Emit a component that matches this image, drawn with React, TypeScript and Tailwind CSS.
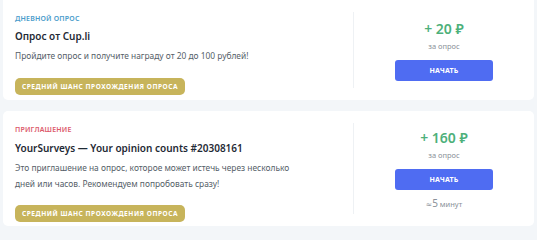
import React from "react";

const font = { fontFamily: '"Noto Sans", "DejaVu Sans", sans-serif' };

function Badge() {
  return (
    <div className="inline-flex h-[17px] items-center rounded-[5px] bg-[#c7b45b] px-[7px] text-[6.6px] font-bold uppercase tracking-[0.5px] text-white">
      Средний шанс прохождения опроса
    </div>
  );
}

function Right({ price, time }: { price: string; time?: string }) {
  return (
    <div className="my-[12px] flex w-[181px] shrink-0 flex-col items-center justify-center border-l border-[#eef1f4]">
      <div className="text-[14px] font-semibold leading-[20px] text-[#4db07a]">{price}</div>
      <div className="mt-[1px] text-[7.5px] leading-[12px] text-[#8a9199]">за опрос</div>
      <button className="mt-[8px] h-[21px] w-[98px] rounded-[3px] bg-[#4f6cf2] text-[7px] font-bold uppercase leading-none tracking-[0.2px] text-white">
        Начать
      </button>
      {time && (
        <div className="mt-[7px] text-[7.5px] leading-[12px] text-[#8a9199]">
          ≈<span className="text-[10px]">5</span> минут
        </div>
      )}
    </div>
  );
}

export default function App() {
  return (
    <div style={font} className="flex h-[240px] w-[537px] flex-col gap-[11px] bg-[#f3f6f9] px-[3px]">
      <div className="flex h-[100px] rounded-b-[5px] bg-white">
        <div className="flex-1 pl-[12px] pr-[44px] pt-[13px]">
          <div className="text-[7px] font-semibold uppercase leading-[12px] tracking-[0.2px] text-[#4a9ccb]">Дневной опрос</div>
          <div className="mt-[3px] text-[10px] font-semibold leading-[16px] text-[#1f2a35]">Опрос от Cup.li</div>
          <div className="mt-[4px] text-[8.4px] leading-[16px] text-[#555e68]">
            Пройдите опрос и получите награду от 20 до 100 рублей!
          </div>
          <div className="mt-[7px]">
            <Badge />
          </div>
        </div>
        <Right price="+ 20 ₽" />
      </div>
      <div className="flex h-[115px] rounded-[5px] bg-white">
        <div className="flex-1 pl-[12px] pr-[44px] pt-[13px]">
          <div className="text-[7px] font-semibold uppercase leading-[12px] tracking-[0.2px] text-[#dc5a6b]">Приглашение</div>
          <div className="mt-[4px] text-[10px] font-semibold leading-[16px] text-[#1f2a35]">
            YourSurveys — Your opinion counts #20308161
          </div>
          <div className="mt-[4px] text-[8.4px] leading-[16px] text-[#555e68]">
            Это приглашение на опрос, которое может истечь через несколько дней или часов. Рекомендуем попробовать сразу!
          </div>
          <div className="mt-[6px]">
            <Badge />
          </div>
        </div>
        <Right price="+ 160 ₽" time="5" />
      </div>
    </div>
  );
}
